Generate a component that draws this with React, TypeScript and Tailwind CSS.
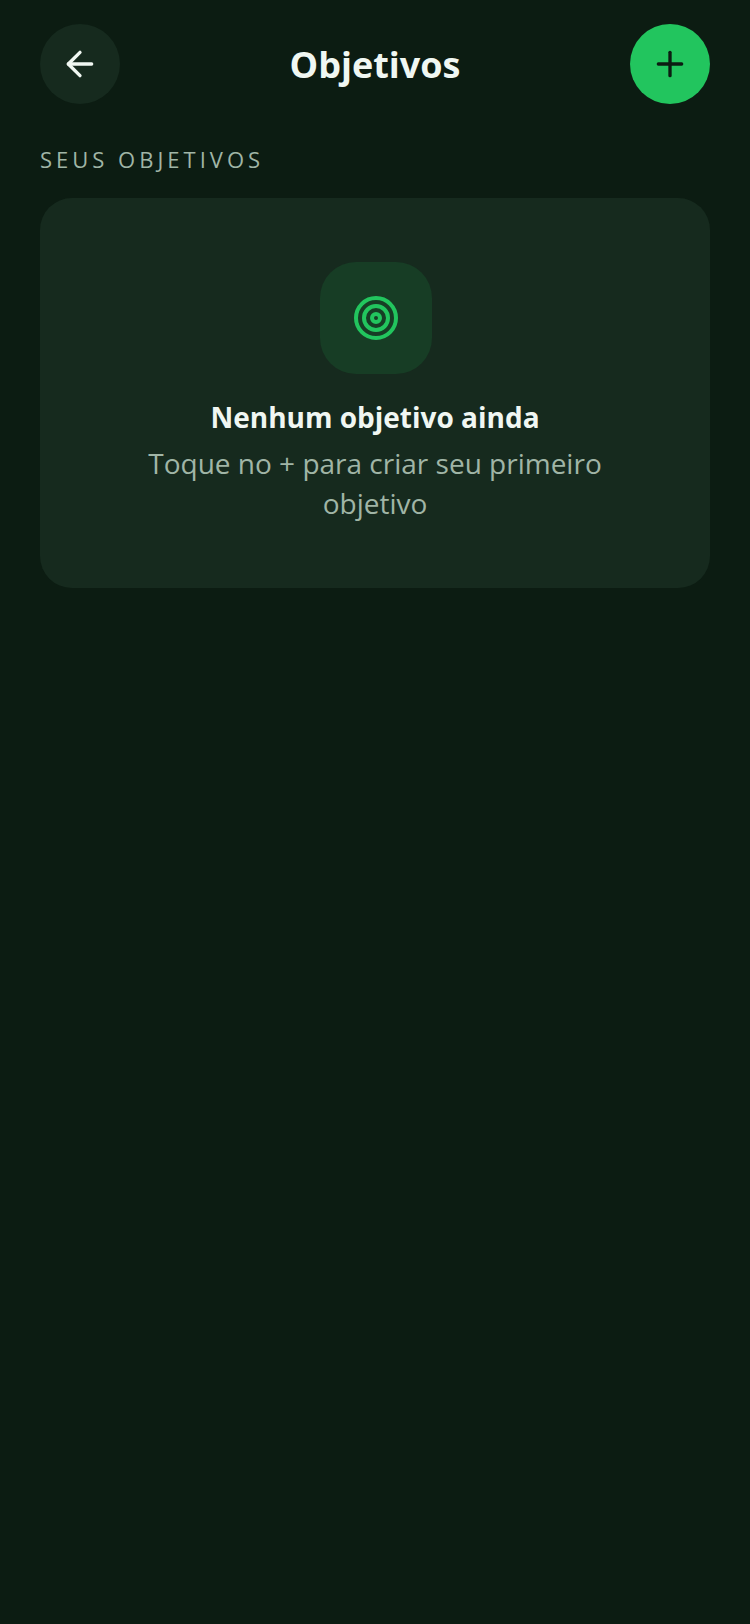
import { ArrowLeft, Plus } from "lucide-react";

const App = () => {
  return (
    <div className="min-h-[1624px] bg-[#0c1c12] px-10 pt-6 font-['Open_Sans',sans-serif]">
      <header className="flex items-center justify-between">
        <button className="flex h-20 w-20 items-center justify-center rounded-full bg-[#162a1e] text-[#f0f7f2]">
          <ArrowLeft size={40} strokeWidth={2} />
        </button>
        <h1 className="mt-[2px] text-[36px] leading-[48px] font-bold text-[#f0f7f2]">Objetivos</h1>
        <button className="flex h-20 w-20 items-center justify-center rounded-full bg-[#22c55e] text-[#0c1c12]">
          <Plus size={40} strokeWidth={2} />
        </button>
      </header>

      <h2 className="mt-[40px] text-[22px] leading-[30px] font-normal tracking-[4px] text-[#a0b5a6]">SEUS OBJETIVOS</h2>

      <div className="mt-[24px] flex h-[390px] flex-col items-center rounded-[32px] bg-[#162a1e] px-20 pt-16">
        <div className="ml-[2px] flex h-[112px] w-[112px] items-center justify-center rounded-[36px] bg-[#173d25]">
          <svg width="44" height="44" viewBox="0 0 44 44" fill="none" stroke="#22c55e" strokeWidth="4">
            <circle cx="22" cy="22" r="20" />
            <circle cx="22" cy="22" r="12" />
            <circle cx="22" cy="22" r="4" />
          </svg>
        </div>
        <p className="mt-[24px] text-[28px] leading-[38px] font-bold text-[#f0f7f2]">Nenhum objetivo ainda</p>
        <p className="mt-[7px] text-center text-[28px] leading-[40px] text-[#a0b5a6]">
          Toque no + para criar seu primeiro objetivo
        </p>
      </div>
    </div>
  );
};

export default App;
